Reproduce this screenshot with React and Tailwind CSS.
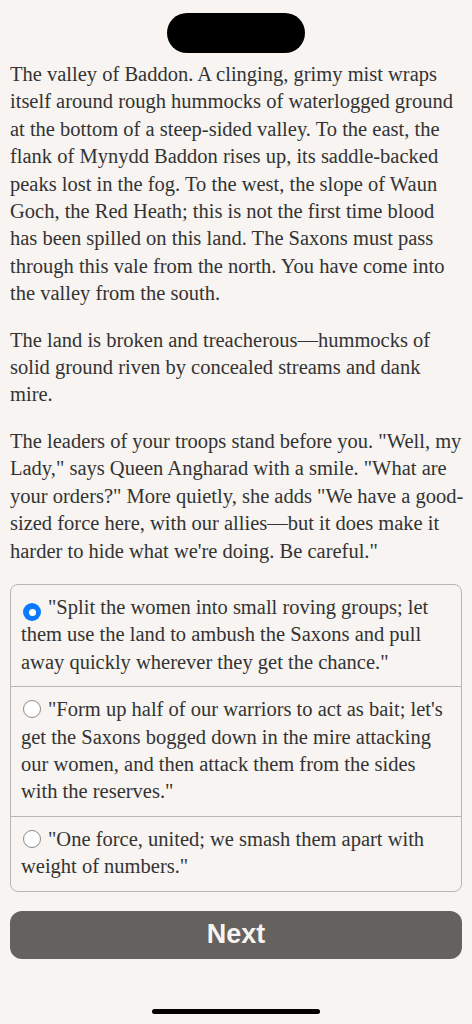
import { useState } from 'react';

// lines kept as in the screenshot so wrapping matches
const paragraphs = [
  [
    'The valley of Baddon. A clinging, grimy mist wraps',
    'itself around rough hummocks of waterlogged ground',
    'at the bottom of a steep-sided valley. To the east, the',
    'flank of Mynydd Baddon rises up, its saddle-backed',
    'peaks lost in the fog. To the west, the slope of Waun',
    'Goch, the Red Heath; this is not the first time blood',
    'has been spilled on this land. The Saxons must pass',
    'through this vale from the north. You have come into',
    'the valley from the south.',
  ],
  [
    'The land is broken and treacherous—hummocks of',
    'solid ground riven by concealed streams and dank',
    'mire.',
  ],
  [
    'The leaders of your troops stand before you. "Well, my',
    'Lady," says Queen Angharad with a smile. "What are',
    'your orders?" More quietly, she adds "We have a good-',
    'sized force here, with our allies—but it does make it',
    "harder to hide what we're doing. Be careful.\"",
  ],
];

const options = [
  [
    '"Split the women into small roving groups; let',
    'them use the land to ambush the Saxons and pull',
    'away quickly wherever they get the chance."',
  ],
  [
    '"Form up half of our warriors to act as bait; let\'s',
    'get the Saxons bogged down in the mire attacking',
    'our women, and then attack them from the sides',
    'with the reserves."',
  ],
  [
    '"One force, united; we smash them apart with',
    'weight of numbers."',
  ],
];

export default function App() {
  const [choice, setChoice] = useState(0);

  return (
    <div className="min-h-[1024px] bg-[#f7f4f1] flex flex-col">
      {/* status pill */}
      <div className="mx-auto mt-[13px] h-10 w-[138px] rounded-full bg-black" />

      <div
        className="px-[10px] pt-[8px] text-[20.5px] leading-[27.4px] text-[#333]"
        style={{ fontFamily: '"Liberation Serif", serif' }}
      >
        {paragraphs.map((lines, p) => (
          <p key={p} className={p > 0 ? 'mt-[19px]' : ''}>
            {lines.map((l, j) => (
              <span key={j} className="block whitespace-nowrap">{l}</span>
            ))}
          </p>
        ))}

        <div className="mt-[19px] rounded-lg border border-[#b8b6b4] overflow-hidden">
          {options.map((lines, i) => (
            <button
              key={i}
              onClick={() => setChoice(i)}
              className={`block w-full text-left px-[10px] pt-[9px] pb-[10px] ${i > 0 ? 'border-t border-[#b8b6b4]' : ''}`}
            >
              {lines.map((l, j) => (
                <span key={j} className="block whitespace-nowrap">
                  {j === 0 && (
                    <span className="inline-flex align-[-2px] mr-[7px] ml-[2px]">
                      {choice === i ? (
                        <span className="h-[18px] w-[18px] rounded-full bg-[#0a7aff] flex items-center justify-center">
                          <span className="h-[7px] w-[7px] rounded-full bg-white" />
                        </span>
                      ) : (
                        <span className="h-[18px] w-[18px] rounded-full border border-[#8a8a8a] bg-white" />
                      )}
                    </span>
                  )}
                  {l}
                </span>
              ))}
            </button>
          ))}
        </div>

        <button
          className="mt-[19px] w-full h-12 rounded-xl bg-[#64615e] text-[#f7f4f1] text-[27px] font-bold"
          style={{ fontFamily: '"Liberation Sans", sans-serif' }}
        >
          Next
        </button>
      </div>

      <div className="mt-auto mb-[10px] mx-auto h-[5px] w-[168px] rounded-full bg-black" />
    </div>
  );
}
